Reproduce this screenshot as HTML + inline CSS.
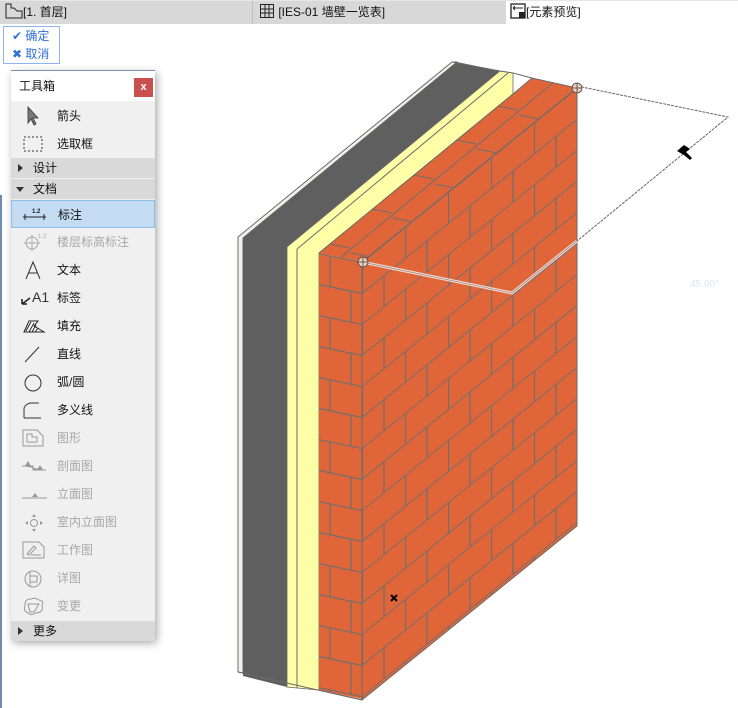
<!DOCTYPE html>
<html><head><meta charset="utf-8"><style>
*{margin:0;padding:0;box-sizing:border-box}
body{width:738px;height:708px;background:#fff;position:relative;overflow:hidden;font-family:"Liberation Sans","Noto Sans CJK SC",sans-serif;font-size:12px;color:#111}
.tabs{position:absolute;left:0;top:0;width:738px;height:24px;background:#d8d8d8;border-top:1px solid #e6e6e6}
.tab{position:absolute;top:0;height:23px;line-height:23px;font-size:12px}
.ok{position:absolute;left:3px;top:26px;width:57px;height:38px;border:1px solid #8fb4f0;background:#fff;color:#2f6fd6;font-size:12px}
.ok div{height:18px;line-height:18px;padding-left:8px}
.tb{position:absolute;left:11px;top:70px;width:144px;height:570px;background:#f0f0f0;border-top:1px solid #7a8fa8;box-shadow:2px 3px 8px rgba(0,0,0,.35)}
.tt{height:30px;background:#fff;line-height:30px;padding-left:8px;font-size:12px;position:relative}
.x{position:absolute;right:2px;top:7px;width:19px;height:19px;background:#c9504f;color:#fff;font-size:11px;line-height:18px;text-align:center;font-weight:bold}
.it{position:absolute;left:0;width:144px;height:28px;line-height:28px;padding-left:46px;font-size:12px}
.it svg{position:absolute;left:10px;top:4px}
.g{color:#a8a8a8}
.hd{position:absolute;left:0;width:144px;height:20px;line-height:20px;background:#d9d9d9;padding-left:22px;font-size:12px}
.hd:before{content:"";position:absolute;left:7px;top:6px;border-left:5px solid #333;border-top:4px solid transparent;border-bottom:4px solid transparent}
.hd.o:before{left:5px;top:8px;border-top:5px solid #333;border-left:4px solid transparent;border-right:4px solid transparent;border-bottom:0}
.sel{background:#c3dcf2;border:1px solid #8cc0ec}
</style></head><body>
<svg width="738" height="708" style="position:absolute;left:0;top:0">
<defs>
<pattern id="bf" width="43" height="62" patternUnits="userSpaceOnUse">
<rect width="43" height="62" fill="#e0663a"/>
<path d="M0 0.5H43M0 31.5H43M0.5 0V31M22 31V62" stroke="#6e6e6e" stroke-width="1.2" fill="none"/>
</pattern>
<pattern id="bs" width="43" height="62" patternUnits="userSpaceOnUse">
<rect width="43" height="62" fill="#e0663a"/>
<path d="M0 0.5H43M0 31.5H43M11 0V31M32 31V62" stroke="#6e6e6e" stroke-width="1.2" fill="none"/>
</pattern>
</defs>
<polygon points="238,237 452,62 457,62 243,238 243,673 238,672" fill="#f2f2ea" stroke="#6a6a6a" stroke-width="1"/>
<polygon points="243,238 457,62 500,71 287,247 287,687 243,676" fill="#5f5f5f"/>
<polygon points="287,247 500,71 513,73 513,94 319,253 319,690 287,687" fill="#ffffa8" stroke="#6a6a6a" stroke-width="0.8"/>
<line x1="297" y1="249" x2="297" y2="688" stroke="#6a6a6a"/>
<line x1="297" y1="249" x2="508" y2="73" stroke="#6a6a6a"/>
<g transform="matrix(1,0.21,0,1,319,253)"><rect width="43" height="437" fill="url(#bs)"/></g>
<polygon points="319,253 513,94 532,78 577,88 362,262" fill="#e0663a"/>
<g stroke="#6e6e6e" stroke-width="1">
<line x1="340" y1="258" x2="553" y2="83"/>
<line x1="330" y1="244" x2="350" y2="248"/><line x1="372" y1="209" x2="392" y2="213"/><line x1="414" y1="175" x2="434" y2="179"/><line x1="456" y1="140" x2="476" y2="144"/><line x1="498" y1="106" x2="518" y2="110"/>
<line x1="351" y1="253" x2="371" y2="257"/><line x1="393" y1="218" x2="413" y2="222"/><line x1="435" y1="184" x2="455" y2="188"/><line x1="477" y1="149" x2="497" y2="153"/><line x1="519" y1="115" x2="539" y2="119"/>
</g>
<g transform="matrix(1,-0.81,0,1,362,262)"><rect width="215" height="438" fill="url(#bf)"/></g>
<polyline points="319,253 513,94 532,78 577,88 577,526 362,700 319,690" fill="none" stroke="#6a6a6a" stroke-width="1"/>
<line x1="362" y1="262" x2="362" y2="700" stroke="#6a6a6a"/>
<line x1="362" y1="262" x2="577" y2="88" stroke="#6a6a6a"/>
<polyline points="238,672 362,700" stroke="#6a6a6a" fill="none"/>
<polyline points="452,62 500,71 513,73 532,78" stroke="#6a6a6a" fill="none"/>
<polyline points="362,262 512,293 577,241" fill="none" stroke="#f6d8cc" stroke-width="3"/>
<polyline points="362,262 512,293 577,241" fill="none" stroke="#777" stroke-width="0.6"/>
<polyline points="577,86 728,117 577,241" fill="none" stroke="#666" stroke-width="1" stroke-dasharray="3,1"/>
<circle cx="577" cy="88" r="5" fill="#f3c9b8" stroke="#444" stroke-width="0.8"/><path d="M572 88H582M577 83V93" stroke="#444" stroke-width="0.8"/>
<circle cx="363" cy="262" r="5" fill="#f3c9b8" stroke="#444" stroke-width="0.8"/><path d="M358 262H368M363 257V267" stroke="#444" stroke-width="0.8"/>
<path d="M677 151 L684 145 L690 149 L686 152 L692 158 L690 160 L684 155 Z" fill="#000"/>
<text x="690" y="287" font-size="10" fill="#d8e6f8" font-family="Liberation Sans">45.00°</text>
<path d="M391 595l6 6M397 595l-6 6" stroke="#000" stroke-width="2"/>
</svg>
<div class="tabs">
<div class="tab" style="left:5px"><svg width="18" height="16" style="vertical-align:-3px"><path d="M1 15V1H6V5H9L12 8H17V15Z" fill="none" stroke="#222"/></svg>[1. 首层]</div>
<div style="position:absolute;left:252px;top:0;width:1px;height:23px;background:#c0c0c0"></div>
<div class="tab" style="left:259px"><svg width="16" height="16" style="vertical-align:-3px"><path d="M1.5 1.5H14.5V14.5H1.5ZM1.5 6H14.5M1.5 10H14.5M6 1.5V14.5M10 1.5V14.5" fill="none" stroke="#222"/></svg> [IES-01 墙壁一览表]</div>
<div style="position:absolute;left:506px;top:0;width:232px;height:24px;background:#fff"></div>
<div class="tab" style="left:510px"><svg width="16" height="16" style="vertical-align:-3px"><rect x="1" y="1" width="14" height="14" fill="none" stroke="#222" stroke-width="1.3"/><path d="M3 5H13M3 5l2-2M3 5l2 2" stroke="#222" fill="none"/><rect x="9" y="9" width="6" height="6" fill="#222"/></svg>[元素预览]</div>
</div>
<div class="ok"><div>✔ 确定</div><div>✖ 取消</div></div>
<div style="position:absolute;left:0;top:195px;width:2px;height:513px;background:#6f8cad"></div>
<div class="tb">
<div class="tt">工具箱<div class="x">x</div></div>
<div class="it" style="top:31px"><svg width="24" height="20"><path d="M7 1V17L10 13L13 19L15 18L12 12L17 12Z" fill="#777" stroke="#333" stroke-width="0.8"/></svg>箭头</div>
<div class="it" style="top:59px"><svg width="24" height="20"><rect x="3" y="3" width="18" height="14" fill="none" stroke="#333" stroke-dasharray="2,2"/></svg>选取框</div>
<div class="hd" style="top:87px">设计</div>
<div class="hd o" style="top:108px">文档</div>
<div class="it sel" style="top:129px"><svg width="30" height="20" style="left:10px"><text x="10" y="8" font-size="6" font-weight="bold" font-family="Liberation Sans" fill="#222">1.2</text><path d="M1 12H24M3 9V15M22 9V15" stroke="#222"/></svg>标注</div>
<div class="it g" style="top:157px"><svg width="30" height="20"><circle cx="11" cy="11" r="6" fill="none" stroke="#aaa"/><path d="M3 11H19M11 3V19" stroke="#aaa"/><text x="17" y="6" font-size="6" fill="#aaa" font-family="Liberation Sans">1.2</text></svg>楼层标高标注</div>
<div class="it" style="top:185px"><svg width="30" height="20"><path d="M5 19L12 2L19 19M8 13H16" fill="none" stroke="#333"/></svg>文本</div>
<div class="it" style="top:213px"><svg width="40" height="20" style="left:9px"><path d="M2 16L10 10M2 16V11M2 16H7" stroke="#222" stroke-width="1.5" fill="none"/><text x="12" y="14" font-size="14" font-family="Liberation Sans" fill="#333">A1</text></svg>标签</div>
<div class="it" style="top:241px"><svg width="30" height="20"><path d="M3 16L8 5H17L13 10L23 16Z" fill="#fff" stroke="#222"/><path d="M5 15L10 6M8 16L13 7M11 16L15 9M14 16L17 12" stroke="#222"/></svg>填充</div>
<div class="it" style="top:269px"><svg width="30" height="20"><path d="M4 18L18 3" stroke="#333"/></svg>直线</div>
<div class="it" style="top:297px"><svg width="30" height="20"><circle cx="12" cy="11" r="8" fill="none" stroke="#333"/></svg>弧/圆</div>
<div class="it" style="top:325px"><svg width="30" height="20"><path d="M3 18V9Q3 5 9 3H18M3 18H20" fill="none" stroke="#333"/></svg>多义线</div>
<div class="it g" style="top:353px"><svg width="30" height="20"><path d="M2 2H16L22 8V18H2Z" fill="none" stroke="#999"/><path d="M6 6H11V9H16V14H6Z" fill="none" stroke="#999"/></svg>图形</div>
<div class="it g" style="top:381px"><svg width="30" height="20"><path d="M1 10H12V14H25M5 9L7 6L9 9ZM17 13L19 10L21 13Z" fill="#999" stroke="#999"/></svg>剖面图</div>
<div class="it g" style="top:409px"><svg width="30" height="20"><path d="M1 14H26" stroke="#999"/><path d="M11 13L14 9L17 13Z" fill="#999"/></svg>立面图</div>
<div class="it g" style="top:437px"><svg width="30" height="20"><circle cx="13" cy="11" r="3.5" fill="none" stroke="#999"/><path d="M13 2L11 5H15ZM13 20L11 17H15ZM4 11L7 9V13ZM22 11L19 9V13Z" fill="#999"/></svg>室内立面图</div>
<div class="it g" style="top:465px"><svg width="30" height="20"><path d="M2 2H18L23 7V18H2Z" fill="none" stroke="#999"/><path d="M6 14L13 6L15 8L8 15ZM10 15H20" fill="none" stroke="#999"/></svg>工作图</div>
<div class="it g" style="top:493px"><svg width="30" height="20"><circle cx="12" cy="11" r="8" fill="none" stroke="#999"/><path d="M9 3V19M9 8H16V14H9" fill="none" stroke="#999"/></svg>详图</div>
<div class="it g" style="top:521px"><svg width="30" height="20"><path d="M4 10Q3 3 10 3Q14 1 18 4Q23 4 21 10Q23 16 15 17Q10 20 7 17Q2 15 4 10Z" fill="none" stroke="#999"/><path d="M7 8H18L13 16H9Z" fill="none" stroke="#999"/></svg>变更</div>
<div class="hd" style="top:550px">更多</div>
</div>
</body></html>
